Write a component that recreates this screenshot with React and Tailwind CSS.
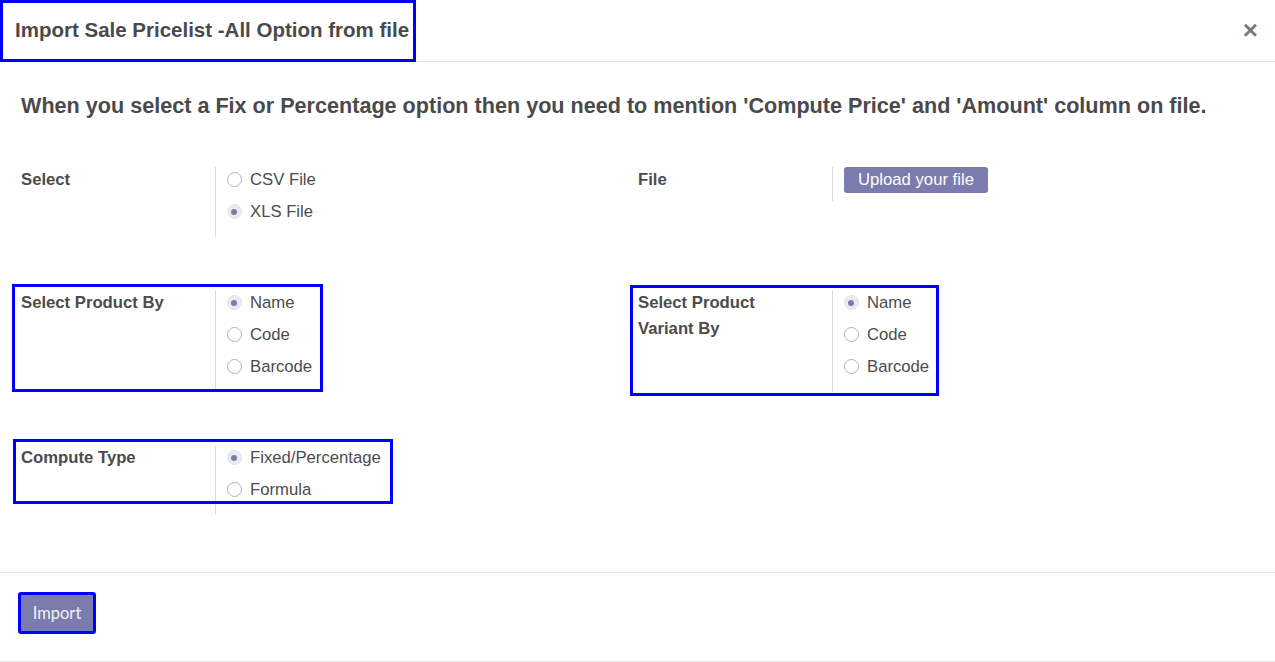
import React from 'react';

const Radio = ({ checked, label }) => (
  <div className="flex items-center h-[25px]">
    {checked ? (
      <span className="ml-[-0.5px] w-[15px] h-[15px] rounded-full bg-[#e9ecef] border border-[#e2e5e9] flex items-center justify-center">
        <span className="w-[6px] h-[6px] rounded-full bg-[#7c7bad]" />
      </span>
    ) : (
      <span className="ml-[-0.5px] w-[15px] h-[15px] rounded-full bg-white border border-[#adb5bd]" />
    )}
    <span className="ml-[8.5px] text-[16.7px] text-[#4c4c4c]">{label}</span>
  </div>
);

const Field = ({ label, options, checkedIndex, box }) => (
  <div className="relative flex items-start">
    <div className="w-[194px] pr-[20px] font-bold text-[16.7px] leading-[26px] text-[#4c4c4c]">
      {label}
    </div>
    <div className="border-l border-[#dcdcdc] pl-[11px] pb-[13px] flex flex-col gap-[7px]">
      {options.map((o, i) => (
        <Radio key={o} label={o} checked={i === checkedIndex} />
      ))}
    </div>
    {box}
  </div>
);

export default function App() {
  return (
    <div className="w-[1275px] h-[662px] bg-white font-['Liberation_Sans',Arial,sans-serif] text-[#4c4c4c] overflow-hidden">
      {/* header */}
      <div className="relative h-[62px] border-b border-[#e5e5e5] flex items-center justify-between pl-[15px] pr-[17px]">
        <h4 className="font-bold text-[20.5px] text-[#4a4a4a]">Import Sale Pricelist -All Option from file</h4>
        <span className="text-[26px] font-bold leading-none text-[#7a7a7a] -mt-[2px]">×</span>
        <div className="absolute left-0 top-0 w-[416px] h-[62px] border-[3px] border-[#0000ff]" />
      </div>

      {/* body */}
      <div className="h-[510px] pl-[21px] pr-[20px] pt-[31px]">
        <h3 className="font-bold text-[21.6px] leading-[26px] text-[#4a4a4a] whitespace-nowrap">
          When you select a Fix or Percentage option then you need to mention 'Compute Price' and 'Amount' column on file.
        </h3>

        <div className="mt-[48px] grid grid-cols-[617px_617px] gap-y-[53px] items-start">
          <Field label="Select" options={['CSV File', 'XLS File']} checkedIndex={1} />

          <div className="flex items-start">
            <div className="w-[194px] font-bold text-[16.7px] leading-[26px]">File</div>
            <div className="border-l border-[#dcdcdc] pl-[11px] pb-[8px]">
              <button className="h-[26px] px-[14px] rounded-[3px] bg-[#7c7bad] text-[16.7px] text-white leading-[26px]">
                Upload your file
              </button>
            </div>
          </div>

          <Field
            label="Select Product By"
            options={['Name', 'Code', 'Barcode']}
            checkedIndex={0}
            box={<div className="absolute left-[-9px] top-[-6px] w-[311px] h-[108px] border-[3px] border-[#0000ff]" />}
          />

          <Field
            label="Select Product Variant By"
            options={['Name', 'Code', 'Barcode']}
            checkedIndex={0}
            box={<div className="absolute left-[-8px] top-[-5px] w-[309px] h-[111px] border-[3px] border-[#0000ff]" />}
          />

          <Field
            label="Compute Type"
            options={['Fixed/Percentage', 'Formula']}
            checkedIndex={0}
            box={<div className="absolute left-[-8px] top-[-6px] w-[380px] h-[65px] border-[3px] border-[#0000ff]" />}
          />
        </div>
      </div>

      {/* footer */}
      <div className="h-[90px] border-t border-b border-[#e5e5e5] pl-[18px] pt-[19px]">
        <button className="w-[78px] h-[42px] border-[3px] border-[#0000ff] rounded-[3px] bg-[#7c7bad] text-[16.5px] text-[#f2f2f2] font-['Lato',sans-serif]">
          Import
        </button>
      </div>
    </div>
  );
}
